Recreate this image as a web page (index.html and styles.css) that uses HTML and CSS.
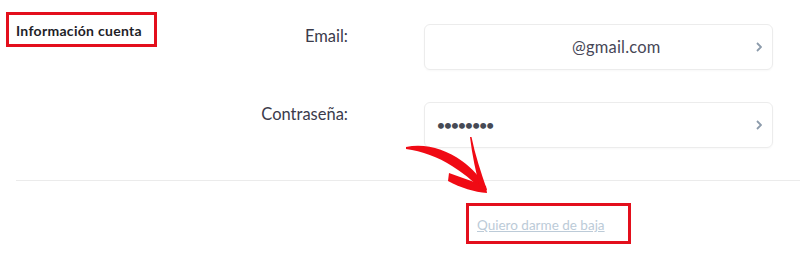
FILE: index.html
```html
<!DOCTYPE html>
<html lang="es">
<head>
  <meta charset="UTF-8">
  <meta name="viewport" content="width=device-width, initial-scale=1.0">
  <title>Información cuenta</title>
  <link rel="stylesheet" href="styles.css">
</head>
<body>
  <div class="page">
    <div class="account">
      <h2 class="section-title">Información cuenta</h2>
      <div class="fields">
        <div class="field">
          <label>Email:</label>
          <div class="value">
            <span class="masked"></span>
            <span class="text">@gmail.com</span>
            <svg class="chevron" width="6" height="10" viewBox="0 0 6 10"><path d="M1 1l4 4-4 4" fill="none" stroke="currentColor" stroke-width="1.8"/></svg>
          </div>
        </div>
        <div class="field">
          <label>Contraseña:</label>
          <div class="value">
            <span class="dots">••••••••</span>
            <svg class="chevron" width="6" height="10" viewBox="0 0 6 10"><path d="M1 1l4 4-4 4" fill="none" stroke="currentColor" stroke-width="1.8"/></svg>
          </div>
        </div>
      </div>
    </div>

    <div class="divider"></div>

    <div class="unsubscribe">
      <a href="#" class="unsubscribe-link">Quiero darme de baja</a>
    </div>

    <!-- hand drawn arrow pointing to the link -->
    <svg class="arrow" width="800" height="260" viewBox="0 0 800 260">
      <path d="M406,147 C425,143 445,149 462,161 C472,168 480,177 486,188 L482,190 C472,180 462,172 452,166 C438,157 422,151 406,149 Z" />
      <path d="M449,173 C461,177 473,182 486,186 L487,193 C474,192 461,188 448,181 Z" />
      <path d="M470,137 L471.5,137 C475,155 481,172 487,190 L480,189 C476,172 472,155 470,137 Z" />
    </svg>
  </div>
</body>
</html>
```

FILE: styles.css
```css
body {
  margin: 0;
  font-family: Lato, "Liberation Sans", sans-serif;
  background-color: #fff;
  color: #3b3b4b;
}
.page {
  position: relative;
  padding-top: 12px;
}
.account {
  display: flex;
  align-items: flex-start;
  padding-right: 27px;
}
.section-title {
  margin: 0 0 0 6px;
  width: 151px;
  height: 35px;
  box-sizing: border-box;
  border: 3px solid #e30f1c;
  padding: 2px 0 0 7px;
  line-height: 27px;
  font-size: 14px;
  letter-spacing: 0.3px;
  font-weight: 700;
  color: #1e1e28;
}
.fields {
  margin-left: auto;
  padding-top: 12px;
  display: flex;
  flex-direction: column;
  gap: 32px;
}
.field {
  display: grid;
  grid-template-columns: 190px 349px;
  column-gap: 76px;
}
.field label {
  text-align: right;
  font-size: 16.5px;
  line-height: 22px;
  padding-top: 1px;
}
.value {
  height: 46px;
  box-sizing: border-box;
  border: 1px solid #ececec;
  border-radius: 6px;
  display: flex;
  align-items: center;
  padding: 0 10px 0 12px;
  box-shadow: 0 1px 2px rgba(0, 0, 0, 0.03);
  font-size: 16.5px;
  letter-spacing: 0.2px;
  color: #474757;
}
.masked {
  width: 135px;
}
.dots {
  font-size: 13.5px;
  letter-spacing: -0.8px;
  color: #464a55;
  font-weight: 700;
}
.chevron {
  margin-left: auto;
  color: #8c9bab;
}
.divider {
  margin: 32px 0 0 16px;
  border-top: 1px solid #ebebeb;
}
.unsubscribe {
  padding: 22px 0 0 466px;
}
.unsubscribe-link {
  display: inline-block;
  width: 165px;
  height: 41px;
  box-sizing: border-box;
  border: 3px solid #e30f1c;
  padding: 3px 0 0 8px;
  line-height: 32px;
  font-size: 13.5px;
  color: #bccbd8;
  text-decoration: underline;
}
.arrow {
  position: absolute;
  top: 0;
  left: 0;
  fill: #f00a14;
  pointer-events: none;
}
```
